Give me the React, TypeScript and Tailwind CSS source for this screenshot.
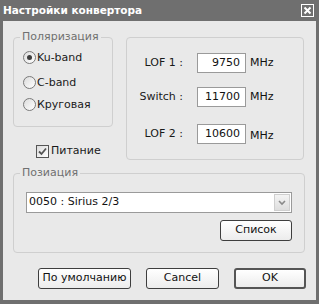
import React from "react";

const font = { fontFamily: '"DejaVu Sans", Verdana, sans-serif' };

const Radio = ({ checked, label, className }: { checked?: boolean; label: string; className?: string }) => (
    <div className={"flex items-center gap-[1px] h-[14px] " + (className ?? "")}>
        <div className="w-[13px] h-[13px] rounded-full border border-[#7a7a7a] bg-gradient-to-br from-[#dcdcdc] to-white flex items-center justify-center">
            {checked && <div className="w-[5px] h-[5px] rounded-full bg-[#3c3c3c]" />}
        </div>
        <span className="text-[11px] text-[#1a1a1a] leading-none">{label}</span>
    </div>
);

const LofRow = ({ label, value, className, mhz }: { label: string; value: string; className?: string; mhz?: string }) => (
    <div className={"flex items-center " + (className ?? "")}>
        <span className="w-[56px] text-right text-[11px] text-[#1a1a1a]">{label}</span>
        <div className="ml-[14px] w-[49px] h-[20px] bg-white border border-[#9a9a9a] flex items-center justify-end pr-[5px] text-[11px] text-[#111]">
            {value}
        </div>
        <span className={"ml-[4px] text-[11px] text-[#111] " + (mhz ?? "")}>MHz</span>
    </div>
);

const Btn = ({ label, w, strong }: { label: string; w: string; strong?: boolean }) => (
    <button
        className={
            "h-[21px] rounded-[3px] bg-gradient-to-b from-white to-[#ececec] text-[11px] text-[#111] flex items-center justify-center " +
            w +
            (strong ? " border-2 border-[#555]" : " border border-[#3e3e3e]")
        }
    >
        {label}
    </button>
);

const Group = ({ title, className, children }: { title?: string; className?: string; children?: React.ReactNode }) => (
    <div className={"relative border border-[#cfcfcf] rounded-[4px] " + (className ?? "")}>
        {title && (
            <span className="absolute -top-[8px] left-[6px] px-[2px] bg-[#e9e9e9] text-[11px] leading-[14px] text-[#707070]">
                {title}
            </span>
        )}
        {children}
    </div>
);

export default function App() {
    return (
        <div style={font} className="w-[319px] h-[304px] bg-[#6f6f6f] flex flex-col px-[3px] pb-[4px] select-none">
            {/* Title bar */}
            <div className="h-[21px] flex items-center justify-between pr-[2px]">
                <span className="text-white font-bold text-[10.5px]">Настройки конвертора</span>
                <svg width="13" height="13" viewBox="0 0 13 13">
                    <rect x="0.5" y="0.5" width="12" height="12" fill="none" stroke="white" />
                    <path d="M3.5 3.5 L9.5 9.5 M9.5 3.5 L3.5 9.5" stroke="white" strokeWidth="2" />
                </svg>
            </div>

            {/* Body */}
            <div className="flex-1 bg-[#e9e9e9] pt-[16px] px-[10px] flex flex-col">
                <div className="flex gap-[13px] items-start">
                    <div className="w-[100px] flex flex-col">
                        <Group title="Поляризация" className="h-[90px] pl-[9px] pt-[12px] flex flex-col">
                            <Radio checked label="Ku-band" />
                            <Radio label="C-band" className="mt-[11px]" />
                            <Radio label="Круговая" className="mt-[8px]" />
                        </Group>
                        <div className="mt-[16px] ml-[23px] flex items-center gap-[2px]">
                            <div className="w-[13px] h-[13px] border border-[#555] bg-gradient-to-br from-[#dcdcdc] to-white flex items-center justify-center">
                                <svg width="9" height="9" viewBox="0 0 9 9">
                                    <path d="M1 4.5 L3.5 7 L8 1.5" fill="none" stroke="#555" strokeWidth="1.8" />
                                </svg>
                            </div>
                            <span className="text-[11px] text-[#1a1a1a]">Питание</span>
                        </div>
                    </div>
                    <Group className="w-[178px] h-[123px] pt-[15px]">
                        <LofRow label="LOF 1 :" value="9750" />
                        <LofRow label="Switch :" value="11700" className="mt-[14px]" />
                        <LofRow label="LOF 2 :" value="10600" className="mt-[17px]" mhz="mt-[4px]" />
                    </Group>
                </div>

                <Group title="Позиация" className="mt-[13px] w-[292px] h-[80px] px-[12px] pt-[18px] flex flex-col">
                    <div className="h-[21px] bg-white border border-[#9a9a9a] flex items-center justify-between pl-[2px] pr-[1px]">
                        <span className="text-[11px] text-[#111]">0050 : Sirius 2/3</span>
                        <div className="w-[16px] h-[17px] bg-gradient-to-b from-[#f4f4f4] to-[#dedede] border border-[#cfcfcf] flex items-center justify-center">
                            <svg width="8" height="6" viewBox="0 0 8 6">
                                <path d="M1 1 L4 4 L7 1" fill="none" stroke="#8a8a8a" strokeWidth="1.6" />
                            </svg>
                        </div>
                    </div>
                    <div className="flex justify-end mt-[7px]">
                        <Btn label="Список" w="w-[72px]" />
                    </div>
                </Group>

                <div className="flex justify-end gap-[15px] mt-[15px]">
                    <Btn label="По умолчанию" w="w-[93px]" />
                    <Btn label="Cancel" w="w-[73px]" />
                    <Btn label="OK" w="w-[72px]" strong />
                </div>
            </div>
        </div>
    );
}
